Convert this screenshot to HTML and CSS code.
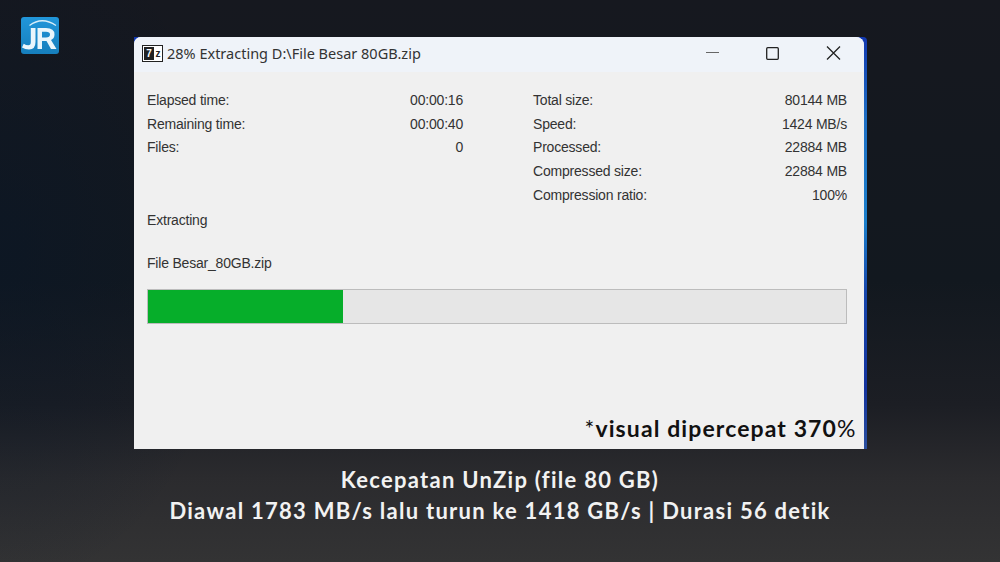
FILE: index.html
```html
<!DOCTYPE html>
<html lang="en">
<head>
    <meta charset="UTF-8">
    <title>Kecepatan UnZip</title>
    <link rel="stylesheet" href="styles.css">
</head>
<body>
    <div class="logo">
        <svg width="38" height="37" viewBox="0 0 38 37">
            <defs>
                <linearGradient id="logoBg" x1="0" y1="0" x2="0" y2="1">
                    <stop offset="0" stop-color="#2196da"/>
                    <stop offset="1" stop-color="#167fbd"/>
                </linearGradient>
            </defs>
            <rect width="38" height="37" rx="3" fill="url(#logoBg)"/>
            <path d="M8.500 8.500 Q21 -1 35 8.500" fill="none" stroke="#d8eef9" stroke-width="1.300"/>
            <path d="M14.500 11 V25 Q14.500 32.500 8 32.500 Q4 32.500 1 30.500 L2.700 26.800 Q5 28.300 7.300 28.300 Q9.800 28.300 9.800 25 V11 Z" fill="#eaf6fc"/>
            <path d="M16.500 32 V11 H25 Q33.500 11 33.500 17.500 Q33.500 21.500 30 23 L35.500 32 H30 L25.500 24 H21 V32 Z M21 14.800 V20.500 H25 Q29 20.500 29 17.600 Q29 14.800 25 14.800 Z" fill="#eaf6fc" fill-rule="evenodd"/>
        </svg>
    </div>

    <div class="window-wrap">
        <div class="window">
            <div class="titlebar">
                <div class="app-icon"><span class="seven">7</span><span class="zed">z</span></div>
                <div class="win-title">28% Extracting D:\File Besar 80GB.zip</div>
                <svg class="win-controls" width="142" height="16" viewBox="0 0 142 16">
                    <path d="M0 7.500 H13" stroke="#666" stroke-width="1" fill="none"/>
                    <rect x="60.700" y="2.700" width="11.600" height="11.600" rx="1" stroke="#222" stroke-width="1.300" fill="none"/>
                    <path d="M121 1.500 L134 14.500 M134 1.500 L121 14.500" stroke="#222" stroke-width="1.300" fill="none"/>
                </svg>
            </div>
            <div class="content">
                <div class="stats">
                    <div class="stat-col">
                        <div class="stat"><span>Elapsed time:</span><span>00:00:16</span></div>
                        <div class="stat"><span>Remaining time:</span><span>00:00:40</span></div>
                        <div class="stat"><span>Files:</span><span>0</span></div>
                    </div>
                    <div class="stat-col">
                        <div class="stat"><span>Total size:</span><span>80144 MB</span></div>
                        <div class="stat"><span>Speed:</span><span>1424 MB/s</span></div>
                        <div class="stat"><span>Processed:</span><span>22884 MB</span></div>
                        <div class="stat"><span>Compressed size:</span><span>22884 MB</span></div>
                        <div class="stat"><span>Compression ratio:</span><span>100%</span></div>
                    </div>
                </div>
                <div class="status">Extracting</div>
                <div class="filename">File Besar_80GB.zip</div>
                <div class="progress"><div class="progress-fill" style="width: 28%"></div></div>
                <div class="note">*<b>visual dipercepat 370</b>%</div>
            </div>
        </div>
    </div>

    <div class="caption">
        <div>Kecepatan UnZip (file 80 GB)</div>
        <div>Diawal 1783 MB/s lalu turun ke 1418 GB/s | Durasi 56 detik</div>
    </div>
</body>
</html>
```

FILE: styles.css
```css
html, body {
    margin: 0;
    padding: 0;
}
body {
    width: 1000px;
    height: 562px;
    overflow: hidden;
    position: relative;
    box-sizing: border-box;
    padding-top: 37px;
    font-family: 'Liberation Sans', Arial, sans-serif;
    background: linear-gradient(180deg, #16181f 0%, #12181f 50%, #1c1e24 72%, #2b2b2e 85%, #333334 100%);
}
body::before {
    content: '';
    position: absolute;
    inset: 0;
    background: radial-gradient(ellipse 240px 340px at 0 250px, rgba(8, 22, 40, 0.5), rgba(8, 22, 40, 0));
}
.logo {
    position: absolute;
    top: 17px;
    left: 21px;
    width: 38px;
    height: 37px;
}
.window-wrap {
    position: relative;
    width: 733px;
    height: 412px;
    margin-left: 134px;
    padding-right: 3.500px;
    box-sizing: border-box;
    border-top-right-radius: 4px;
    background: linear-gradient(180deg, #1238b0 0%, #1e6fc4 20%, #1b7fca 45%, #1746ac 62%, #14339e 85%, #2a4f9e 100%);
}
.window {
    height: 100%;
    background-color: #f0f0f0;
    border-top-left-radius: 7px;
    border-top-right-radius: 8px;
    display: flex;
    flex-direction: column;
}
.titlebar {
    height: 35px;
    flex: none;
    background-color: #eff3f9;
    display: flex;
    align-items: center;
    box-sizing: border-box;
    padding: 0 15.500px 3px 8px;
    border-top-left-radius: 7px;
    border-top-right-radius: 8px;
}
.app-icon {
    width: 18px;
    height: 14px;
    border: 1px solid #222;
    padding: 1px 0 0 1px;
    background: #fff;
    display: flex;
    font-weight: bold;
    font-size: 10px;
    line-height: 13px;
    text-align: center;
    margin-right: 4px;
    box-sizing: content-box;
}
.seven {
    width: 10px;
    height: 13px;
    background: #222;
    color: #fff;
}
.zed {
    width: 8px;
    color: #222;
}
.win-title {
    flex: 1;
    font-family: 'Noto Sans', sans-serif;
    font-size: 14.500px;
    color: #333;
}
.win-controls {
    display: block;
}
.content {
    flex: 1;
    position: relative;
    padding: 17px 16px 0 13px;
    font-size: 14px;
    color: #333;
    letter-spacing: -0.200px;
}
.stats {
    display: grid;
    grid-template-columns: 316px 314px;
    column-gap: 70px;
    height: 119px;
}
.stat {
    display: flex;
    justify-content: space-between;
    height: 23.700px;
    line-height: 23.700px;
}
.status {
    line-height: 24px;
}
.filename {
    margin-top: 19px;
    line-height: 24px;
}
.progress {
    margin-top: 14px;
    height: 33px;
    width: 698px;
    border: 1px solid #bcbcbc;
    background-color: #e6e6e6;
}
.progress-fill {
    height: 100%;
    background-color: #06ae2a;
}
.note {
    position: absolute;
    right: 7px;
    bottom: 7px;
    font-family: 'Lato', sans-serif;
    font-size: 23px;
    letter-spacing: 1.100px;
    color: #111;
}
.note b {
    font-weight: 700;
}
.caption {
    position: relative;
    margin-top: 15px;
    text-align: center;
    font-family: 'Lato', sans-serif;
    font-weight: 700;
    font-size: 22px;
    line-height: 31px;
    letter-spacing: 1.270px;
    color: #f2f2f2;
}
```
